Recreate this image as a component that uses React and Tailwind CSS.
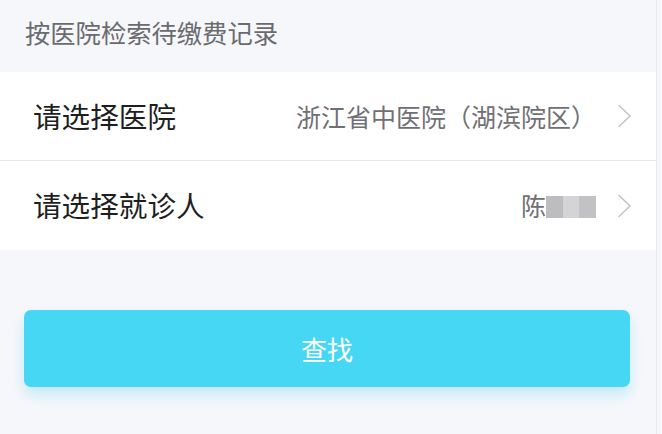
import React from 'react';

const font = { fontFamily: '"Noto Sans CJK SC", "Noto Sans", sans-serif' };

function Chevron() {
  return (
    <svg width="16" height="26" viewBox="0 0 16 26" className="ml-[20px] shrink-0">
      <path d="M2.5 2 L14 13 L2.5 24" fill="none" stroke="#c4c4c8" strokeWidth="1.5" />
    </svg>
  );
}

function Row({ label, children, border }) {
  return (
    <div className={`flex items-center h-[89px] bg-white pl-[33px] pr-[24px] ${border ? 'border-b border-[#e6e6ea]' : ''}`}>
      <span className="text-[28.6px] text-[#1e1e1e] leading-none">{label}</span>
      <div className="flex-1 flex items-center justify-end">
        {children}
        <Chevron />
      </div>
    </div>
  );
}

export default function App() {
  return (
    <div style={font} className="w-[662px] h-[434px] bg-[#f6f7fb] overflow-hidden flex">
      <div className="w-[657px] border-r border-[#e9e9ee] flex flex-col">
        <div className="h-[72px] flex items-center pl-[25px] pb-[6px]">
          <span className="text-[25.3px] text-[#6b6b6f] leading-none">按医院检索待缴费记录</span>
        </div>
        <Row label="请选择医院" border>
          <span className="text-[25px] text-[#707074] leading-none">浙江省中医院（湖滨院区）</span>
        </Row>
        <Row label="请选择就诊人">
          <span className="text-[25px] text-[#707074] leading-none">陈</span>
          <span className="flex h-[22px] w-[50px] mt-[2px]">
            <span className="w-[17px] bg-[#bdbdc0]" />
            <span className="w-[16px] bg-[#d4d4d6]" />
            <span className="w-[17px] bg-[#c2c2c5]" />
          </span>
        </Row>
        <div className="pt-[60px] px-[24px]">
          <button className="w-[606px] h-[77px] rounded-[7px] bg-[#46d7f5] text-white text-[26px] leading-none shadow-[0_8px_14px_rgba(70,200,240,0.28)] flex items-center justify-center">
            查找
          </button>
        </div>
      </div>
    </div>
  );
}
